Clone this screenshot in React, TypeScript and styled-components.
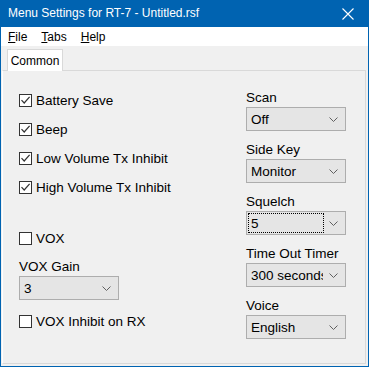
import styled, {createGlobalStyle} from 'styled-components';

const GlobalStyle = createGlobalStyle`
  html, body {
    margin: 0;
    padding: 0;
    background: #f0f0f0;
  }
  body {
    font-family: 'Liberation Sans', Arial, sans-serif;
    color: #000;
  }
`;

const leftChecks = [
  {label: 'Battery Save', checked: true},
  {label: 'Beep', checked: true},
  {label: 'Low Volume Tx Inhibit', checked: true},
  {label: 'High Volume Tx Inhibit', checked: true},
];

const rightFields = [
  {label: 'Scan', value: 'Off'},
  {label: 'Side Key', value: 'Monitor'},
  {label: 'Squelch', value: '5', focused: true},
  {label: 'Time Out Timer', value: '300 seconds'},
  {label: 'Voice', value: 'English'},
];

function CheckBox({checked}: {checked: boolean}) {
  return (
    <Box>
      {checked && (
        <svg width="11" height="11" viewBox="0 0 11 11">
          <path d="M1.5 5.2 L4.2 8 L9.6 1.8" fill="none" stroke="#333" strokeWidth="1.2" />
        </svg>
      )}
    </Box>
  );
}

function Check({label, checked, space}: {label: string; checked: boolean; space?: number}) {
  return (
    <CheckRow $space={space}>
      <CheckBox checked={checked} />
      <span>{label}</span>
    </CheckRow>
  );
}

function Combo({value, focused}: {value: string; focused?: boolean}) {
  return (
    <ComboBox>
      <ComboValue $focused={focused}>{value}</ComboValue>
      <Arrow>
        <svg width="9" height="5" viewBox="0 0 9 5">
          <path d="M0.5 0.5 L4.5 4.5 L8.5 0.5" fill="none" stroke="#606060" strokeWidth="1" />
        </svg>
      </Arrow>
    </ComboBox>
  );
}

function Field({label, value, focused}: {label: string; value: string; focused?: boolean}) {
  return (
    <FieldWrap>
      <FieldLabel>{label}</FieldLabel>
      <Combo value={value} focused={focused} />
    </FieldWrap>
  );
}

export default function App() {
  return (
    <>
      <GlobalStyle />
      <Window>
        <TitleBar>
          <span>Menu Settings for RT-7 - Untitled.rsf</span>
          <svg width="12" height="12" viewBox="0 0 12 12">
            <path d="M0.5 0.5 L11.5 11.5 M11.5 0.5 L0.5 11.5" stroke="#fff" strokeWidth="1.1" />
          </svg>
        </TitleBar>
        <MenuBar>
          <MenuItem><u>F</u>ile</MenuItem>
          <MenuItem><u>T</u>abs</MenuItem>
          <MenuItem><u>H</u>elp</MenuItem>
        </MenuBar>
        <Body>
          <TabStrip>
            <Tab>Common</Tab>
          </TabStrip>
          <Panel>
            <LeftColumn>
              {leftChecks.map(c => (
                <Check key={c.label} label={c.label} checked={c.checked} />
              ))}
              <Check label="VOX" checked={false} space={22} />
              <Field label="VOX Gain" value="3" />
              <Check label="VOX Inhibit on RX" checked={false} />
            </LeftColumn>
            <RightColumn>
              {rightFields.map(f => (
                <Field key={f.label} label={f.label} value={f.value} focused={f.focused} />
              ))}
            </RightColumn>
          </Panel>
        </Body>
      </Window>
    </>
  );
}

const Window = styled.div`
  width: 369px;
  height: 367px;
  box-sizing: border-box;
  border: 1px solid #0063b1;
  border-top: none;
  background: #f0f0f0;
  display: flex;
  flex-direction: column;
`;

const TitleBar = styled.div`
  height: 27px;
  margin: 0 -1px;
  padding: 0 15px 0 8px;
  background: #0063b1;
  color: #fff;
  font-size: 12px;
  display: flex;
  align-items: center;
  justify-content: space-between;
  span {
    margin-top: -1px;
  }
`;

const MenuBar = styled.div`
  height: 19px;
  background: #fff;
  display: flex;
  align-items: center;
  font-size: 12px;
`;

const MenuItem = styled.div`
  padding: 0 7px;
  u {
    text-underline-offset: 1px;
  }
`;

const Body = styled.div`
  flex: 1;
  display: flex;
  flex-direction: column;
  padding: 3px 2px 2px 1px;
`;

const TabStrip = styled.div`
  display: flex;
  padding-left: 5px;
  position: relative;
  z-index: 1;
  margin-bottom: -1px;
`;

const Tab = styled.div`
  width: 56px;
  height: 22px;
  box-sizing: border-box;
  background: #fff;
  border: 1px solid #d9d9d9;
  border-bottom: none;
  font-size: 12px;
  display: flex;
  align-items: center;
  justify-content: center;
`;

const Panel = styled.div`
  flex: 1;
  box-sizing: border-box;
  border: 1px solid #d9d9d9;
  border-left-color: #fff;
  padding: 19px 0 0 16px;
  display: grid;
  grid-template-columns: 227px 100px;
  align-items: start;
  font-size: 13.5px;
`;

const LeftColumn = styled.div`
  display: flex;
  flex-direction: column;
  gap: 13px;
  margin-top: 2px;
`;

const RightColumn = styled.div`
  display: flex;
  flex-direction: column;
  gap: 11px;
`;

const CheckRow = styled.div<{$space?: number}>`
  display: flex;
  align-items: center;
  gap: 4px;
  height: 16px;
  margin-top: ${p => p.$space ?? 0}px;
`;

const Box = styled.span`
  width: 13px;
  height: 13px;
  box-sizing: border-box;
  border: 1px solid #333;
  background: #fff;
  display: flex;
  align-items: center;
  justify-content: center;
`;

const FieldWrap = styled.div`
  display: flex;
  flex-direction: column;
  gap: 1px;
  width: 100px;
`;

const FieldLabel = styled.div`
  height: 16px;
  line-height: 16px;
`;

const ComboBox = styled.div`
  height: 24px;
  box-sizing: border-box;
  border: 1px solid #adadad;
  background: #e5e5e5;
  display: flex;
  align-items: stretch;
`;

const ComboValue = styled.div<{$focused?: boolean}>`
  flex: 1;
  margin: 1px 0 1px 1px;
  padding-left: 2px;
  border: 1px dotted ${p => (p.$focused ? '#000' : 'transparent')};
  display: flex;
  align-items: center;
  white-space: nowrap;
  overflow: hidden;
  min-width: 0;
`;

const Arrow = styled.div`
  width: 19px;
  flex: none;
  display: flex;
  align-items: center;
  justify-content: center;
  padding-right: 2px;
`;
